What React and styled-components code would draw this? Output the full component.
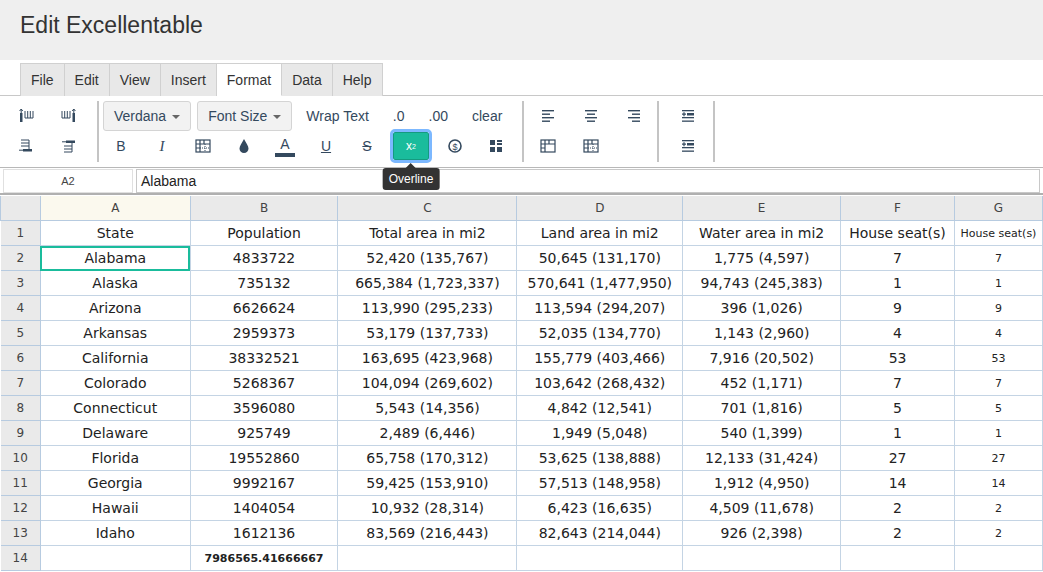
import React from 'react';
import styled, { createGlobalStyle } from 'styled-components';

const Global = createGlobalStyle`
  body { margin: 0; font-family: "Liberation Sans", Arial, sans-serif; background: #fff; overflow: hidden; }
`;

const cols = [
  { name: 'A', w: 150 }, { name: 'B', w: 148 }, { name: 'C', w: 179 }, { name: 'D', w: 166 },
  { name: 'E', w: 158 }, { name: 'F', w: 114 }, { name: 'G', w: 88 },
];

const rows = [
  ['State', 'Population', 'Total area in mi2', 'Land area in mi2', 'Water area in mi2', 'House seat(s)', 'House seat(s)'],
  ['Alabama', '4833722', '52,420 (135,767)', '50,645 (131,170)', '1,775 (4,597)', '7', '7'],
  ['Alaska', '735132', '665,384 (1,723,337)', '570,641 (1,477,950)', '94,743 (245,383)', '1', '1'],
  ['Arizona', '6626624', '113,990 (295,233)', '113,594 (294,207)', '396 (1,026)', '9', '9'],
  ['Arkansas', '2959373', '53,179 (137,733)', '52,035 (134,770)', '1,143 (2,960)', '4', '4'],
  ['California', '38332521', '163,695 (423,968)', '155,779 (403,466)', '7,916 (20,502)', '53', '53'],
  ['Colorado', '5268367', '104,094 (269,602)', '103,642 (268,432)', '452 (1,171)', '7', '7'],
  ['Connecticut', '3596080', '5,543 (14,356)', '4,842 (12,541)', '701 (1,816)', '5', '5'],
  ['Delaware', '925749', '2,489 (6,446)', '1,949 (5,048)', '540 (1,399)', '1', '1'],
  ['Florida', '19552860', '65,758 (170,312)', '53,625 (138,888)', '12,133 (31,424)', '27', '27'],
  ['Georgia', '9992167', '59,425 (153,910)', '57,513 (148,958)', '1,912 (4,950)', '14', '14'],
  ['Hawaii', '1404054', '10,932 (28,314)', '6,423 (16,635)', '4,509 (11,678)', '2', '2'],
  ['Idaho', '1612136', '83,569 (216,443)', '82,643 (214,044)', '926 (2,398)', '2', '2'],
];

const ink = '#34495e';

const Title = styled.header`
  height: 60px;
  box-sizing: border-box;
  background: #efefef;
  display: flex;
  align-items: center;
  padding: 0 0 10px 20px;
  font-size: 23px;
  color: #333;
`;

const Tabs = styled.div`
  display: flex;
  padding: 3px 0 0 20px;
  border-bottom: 1px solid #c8c8c8;
  height: 32px;
`;

const Tab = styled.div`
  padding: 0 ${p => p.$pad}px;
  display: flex;
  align-items: center;
  font-size: 14px;
  color: #333;
  border: 1px solid #d0d0d0;
  border-left: ${p => (p.$first ? '1px solid #d0d0d0' : 'none')};
  border-bottom: ${p => (p.$active ? '1px solid #fff' : 'none')};
  margin-bottom: -1px;
  background: ${p => (p.$active ? '#fff' : '#e8e8e8')};
`;

const Toolbar = styled.div`
  height: 72px;
  display: flex;
  align-items: stretch;
  padding: 5px 0 0 0;
  border-bottom: 1px solid #b8b8b8;
  box-sizing: border-box;
`;

const Group = styled.div`
  display: grid;
  grid-template-columns: ${p => p.$cols};
  grid-template-rows: 30px 30px;
  align-items: center;
  justify-items: center;
  padding: ${p => p.$pad || '0 4px'};
  border-right: 2px solid #c4c4c4;
  margin: 0 0 5px 0;
`;

const StackGroup = styled.div`
  display: flex;
  flex-direction: column;
  padding: 0 4px;
  border-right: 2px solid #c4c4c4;
  margin: 0 0 5px 0;
`;

const RowLine = styled.div`
  display: flex;
  align-items: center;
  height: 30px;
  gap: ${p => (p.$gap ? '11px' : '0')};
  padding-left: ${p => (p.$gap ? '3px' : '0')};
`;

const Icon = styled.span`
  display: flex;
  flex-direction: ${p => (p.$col ? 'column' : 'row')};
  align-items: center;
  justify-content: center;
  color: ${ink};
  font-size: ${p => p.$size || 14}px;
  font-family: ${p => p.$serif ? '"Liberation Serif", serif' : '"Liberation Sans", Arial, sans-serif'};
  font-style: ${p => (p.$italic ? 'italic' : 'normal')};
  text-decoration: ${p => p.$deco || 'none'};
  width: 30px;
  height: 26px;
`;

const ColorBar = styled.span`
  width: 20px;
  height: 4px;
  background: ${ink};
  margin-top: 1px;
`;

const Drop = styled.div`
  height: 28px;
  padding: 0 10px;
  border: 1px solid #d4d4d4;
  border-radius: 3px;
  background: #f2f2f2;
  display: flex;
  align-items: center;
  gap: 6px;
  font-size: 14px;
  color: ${ink};
  margin-right: 6px;
  &::after { content: ''; border: 4px solid transparent; border-top-color: #666; border-bottom: 0; margin-top: 2px; }
`;

const TextBtn = styled.span`
  font-size: 14px;
  color: ${ink};
  padding: 0 ${p => p.$pad || 10}px;
`;

const Active = styled.span`
  position: relative;
  width: 34px;
  height: 26px;
  background: #1abc9c;
  border: 1px solid #159a80;
  outline: 3px solid #7cb8ff;
  border-radius: 2px;
  color: #fff;
  display: flex;
  align-items: center;
  justify-content: center;
  font-size: 12px;
  sup { font-size: 7px; }
`;

const Tip = styled.span`
  position: absolute;
  top: 35px;
  left: 50%;
  transform: translateX(-50%);
  background: #333;
  color: #fff;
  font-size: 12px;
  padding: 4px 6px;
  border-radius: 3px;
  white-space: nowrap;
  z-index: 5;
  &::before { content: ''; position: absolute; top: -5px; left: 50%; margin-left: -5px; border: 5px solid transparent; border-bottom-color: #333; border-top: 0; }
`;

const Formula = styled.div`
  display: flex;
  height: 25px;
  border-bottom: 2px solid #b0b0b0;
  padding: 0 3px;
  align-items: center;
  gap: 3px;
`;

const NameBox = styled.div`
  width: 128px;
  height: 22px;
  border: 1px solid #e0e0e0;
  font-size: 11px;
  color: #444;
  display: flex;
  align-items: center;
  justify-content: center;
`;

const FxInput = styled.div`
  flex: 1;
  height: 22px;
  border: 1px solid #c8c8c8;
  font-size: 14px;
  color: #222;
  display: flex;
  align-items: center;
  padding-left: 4px;
`;

const Table = styled.table`
  border-collapse: collapse;
  table-layout: fixed;
  margin-top: 1px;
  font-family: "DejaVu Sans", Verdana, sans-serif;
`;

const Head = styled.th`
  height: 24px;
  background: ${p => (p.$sel ? '#fbf9ee' : '#eaeaea')};
  border: 1px solid #b7cbe0;
  border-top: none;
  font-weight: normal;
  font-size: 12px;
  color: #444;
  padding: 0;
`;

const RowNum = styled.td`
  background: #eaeaea;
  border: 1px solid #b7cbe0;
  border-left: none;
  font-size: 12px;
  color: #444;
  text-align: center;
  padding: 0;
`;

const Cell = styled.td`
  height: 24px;
  border: 1px solid #c4d4e4;
  text-align: center;
  font-size: ${p => p.$small ? 11 : 14}px;
  font-weight: ${p => (p.$bold ? 'bold' : 'normal')};
  color: #222;
  padding: 0;
  white-space: nowrap;
  overflow: hidden;
  outline: ${p => (p.$sel ? '2px solid #1abc9c' : 'none')};
  outline-offset: -2px;
`;

const Svg = ({ children }) => (
  <svg width="18" height="16" viewBox="0 0 18 16" fill={ink} stroke="none">{children}</svg>
);

const AlignIcon = ({ kind }) => {
  const widths = [12, 8, 12, 8];
  return (
    <Svg>
      {widths.map((w, i) => {
        const x = kind === 'l' ? 3 : kind === 'c' ? 9 - w / 2 : 15 - w;
        return <rect key={i} x={x} y={2 + i * 3.5} width={w} height="1.4" />;
      })}
    </Svg>
  );
};

const IndentIcon = () => (
  <Svg>
    <rect x="3" y="2" width="12" height="1.3" />
    <rect x="8" y="5" width="7" height="2.5" />
    <rect x="3" y="9" width="12" height="1.3" />
    <rect x="3" y="12.5" width="12" height="1.3" />
    <path d="M3 6.2h4M5 4.2v4" stroke={ink} strokeWidth="1.2" />
  </Svg>
);

const GridIcon = ({ dotted }) => (
  <Svg>
    <rect x="2" y="2" width="14" height="12" fill="none" stroke={ink} strokeWidth="1.2" />
    <path d="M2 6h14M6 2v12M2 10h4M10 2v4" stroke={ink} strokeWidth="1.2" fill="none" />
    {dotted && <path d="M6 10h10M11 6v8" stroke={ink} strokeWidth="1" strokeDasharray="1 1" fill="none" />}
  </Svg>
);

const ColIcon = ({ flip }) => (
  <Svg>
    <g transform={flip ? 'translate(18 0) scale(-1 1)' : ''}>
      <rect x="3" y="5" width="2.5" height="9" />
      <path d="M4.2 1v4M2.6 3l1.6-2 1.6 2" stroke={ink} strokeWidth="1" fill="none" />
      <path d="M8 3v7h8V3M10.7 3v7M13.3 3v7" stroke={ink} strokeWidth="1" fill="none" />
    </g>
  </Svg>
);

const RowIcon = ({ flip }) => (
  <Svg>
    <g transform={flip ? 'translate(0 16) scale(1 -1)' : ''}>
      <path d="M4 2h8M4 5h8M4 8h8M12 2v10" stroke={ink} strokeWidth="1" fill="none" />
      <rect x="6" y="11" width="9" height="2.5" />
      <path d="M2 12.2h4" stroke={ink} strokeWidth="1" />
    </g>
  </Svg>
);

export default function App() {
  const tabs = [['File', 10], ['Edit', 10], ['View', 10], ['Insert', 10], ['Format', 10], ['Data', 10], ['Help', 10]];
  return (
    <>
      <Global />
      <Title>Edit Excellentable</Title>
      <Tabs>
        {tabs.map(([t, p], i) => (
          <Tab key={t} $pad={p} $first={i === 0} $active={t === 'Format'}>{t}</Tab>
        ))}
      </Tabs>
      <Toolbar>
        <Group $cols="43px 43px" $pad="0 7px 0 4px">
          <Icon><ColIcon /></Icon>
          <Icon><ColIcon flip /></Icon>
          <Icon><RowIcon /></Icon>
          <Icon><RowIcon flip /></Icon>
        </Group>
        <StackGroup>
          <RowLine>
            <Drop>Verdana</Drop>
            <Drop>Font Size</Drop>
            <TextBtn $pad={8}>Wrap Text</TextBtn>
            <TextBtn $pad={16}>.0</TextBtn>
            <TextBtn $pad={8}>.00</TextBtn>
            <TextBtn $pad={16}>clear</TextBtn>
          </RowLine>
          <RowLine $gap>
            <Icon>B</Icon>
            <Icon $serif $italic $size={15}>I</Icon>
            <Icon><GridIcon dotted /></Icon>
            <Icon>
              <svg width="14" height="16" viewBox="0 0 14 16"><path d="M7 1C5 5 2.5 8 2.5 10.5a4.5 4.5 0 0 0 9 0C11.5 8 9 5 7 1z" fill={ink} /></svg>
            </Icon>
            <Icon $col>
              <span>A</span>
              <ColorBar />
            </Icon>
            <Icon $deco="underline">U</Icon>
            <Icon $deco="line-through">S</Icon>
            <Active>
              x<sup>2</sup>
              <Tip>Overline</Tip>
            </Active>
            <Icon>
              <svg width="16" height="16" viewBox="0 0 16 16"><circle cx="8" cy="8" r="6" fill="none" stroke={ink} strokeWidth="1.6" /><text x="8" y="11.5" fontSize="9" textAnchor="middle" fill={ink} fontFamily="Liberation Sans">$</text></svg>
            </Icon>
            <Icon>
              <svg width="16" height="16" viewBox="0 0 16 16" fill={ink}><rect x="2" y="2" width="5" height="5" /><rect x="9" y="2" width="5" height="2" /><rect x="9" y="5" width="5" height="2" /><rect x="2" y="9" width="5" height="5" /><rect x="9" y="9" width="5" height="5" /></svg>
            </Icon>
          </RowLine>
        </StackGroup>
        <Group $cols="43px 43px 43px" $pad="0 2px">
          <Icon><AlignIcon kind="l" /></Icon>
          <Icon><AlignIcon kind="c" /></Icon>
          <Icon><AlignIcon kind="r" /></Icon>
          <Icon><GridIcon /></Icon>
          <Icon><GridIcon dotted /></Icon>
          <span />
        </Group>
        <Group $cols="30px" $pad="0 10px 0 14px">
          <Icon><IndentIcon /></Icon>
          <Icon><IndentIcon /></Icon>
        </Group>
      </Toolbar>
      <Formula>
        <NameBox>A2</NameBox>
        <FxInput>Alabama</FxInput>
      </Formula>
      <Table>
        <colgroup>
          <col style={{ width: 40 }} />
          {cols.map(c => <col key={c.name} style={{ width: c.w }} />)}
        </colgroup>
        <thead>
          <tr>
            <Head />
            {cols.map(c => <Head key={c.name} $sel={c.name === 'A'}>{c.name}</Head>)}
          </tr>
        </thead>
        <tbody>
          {rows.map((r, i) => (
            <tr key={i}>
              <RowNum>{i + 1}</RowNum>
              {r.map((v, j) => (
                <Cell key={j} $sel={i === 1 && j === 0} $small={j === 6}>{v}</Cell>
              ))}
            </tr>
          ))}
          <tr>
            <RowNum>14</RowNum>
            <Cell />
            <Cell $bold $small>7986565.41666667</Cell>
            <Cell /><Cell /><Cell /><Cell /><Cell />
          </tr>
        </tbody>
      </Table>
    </>
  );
}
